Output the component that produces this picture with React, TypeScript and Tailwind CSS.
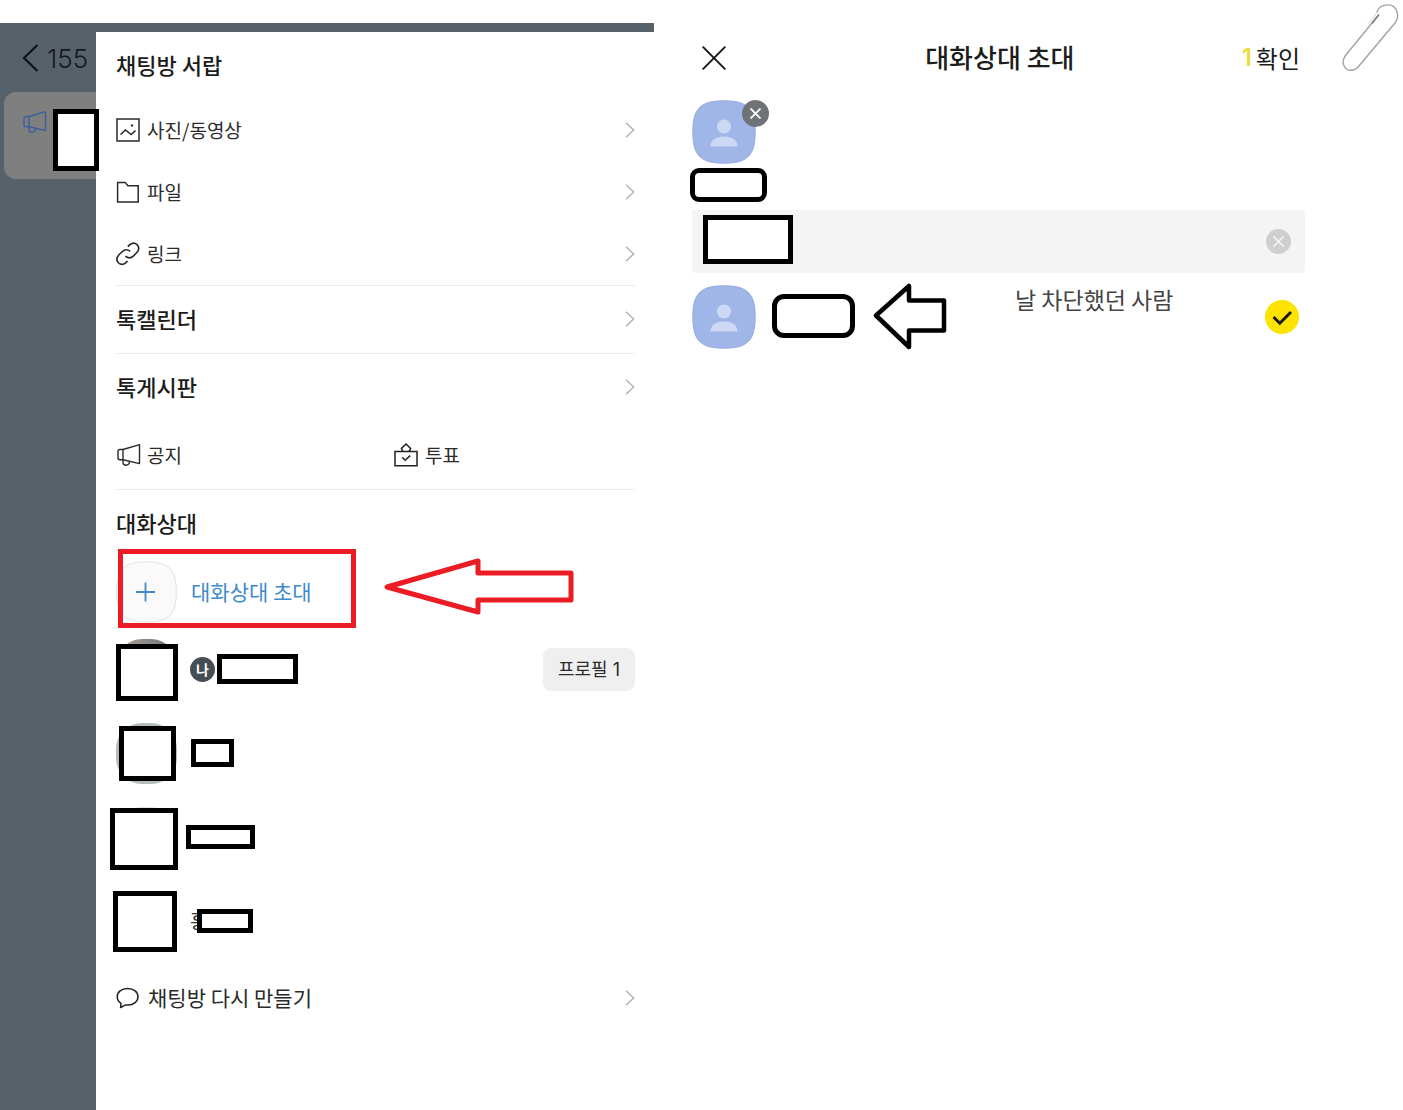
import type { ReactNode } from "react";

const sans = "font-['Noto_Sans_CJK_KR',sans-serif]";

function Chevron() {
  return (
    <svg width="10" height="16" viewBox="0 0 10 16" fill="none" stroke="#b4b4b4" strokeWidth="1.5" aria-hidden="true">
      <path d="M1 .8 8.6 8 1 15.2" />
    </svg>
  );
}

function PhotoIcon() {
  return (
    <svg width="24" height="24" viewBox="0 0 24 24" fill="none" stroke="#2a2a2a" strokeWidth="1.5" aria-hidden="true">
      <rect x="1" y="1" width="22" height="22" />
      <path d="M4.500 16.500 9.500 12l5.600 4.600 4.400-4" />
      <circle cx="16" cy="7.400" r="1.200" fill="#2a2a2a" stroke="none" />
    </svg>
  );
}

function FolderIcon() {
  return (
    <svg width="24" height="24" viewBox="0 0 24 24" fill="none" stroke="#2a2a2a" strokeWidth="1.5" aria-hidden="true">
      <path d="M1.600 22V2.400h7.600l2.600 3.400h10.400V22Z" />
    </svg>
  );
}

function LinkIcon() {
  return (
    <svg width="24" height="24" viewBox="0 0 24 24" fill="none" stroke="#2a2a2a" strokeWidth="1.600" aria-hidden="true">
      <path d="M11.800 4.600C15 1.200 18.400.2 21 2.600c2.600 2.600 2 5.600-.4 8.200l-3 3c-2.600 2.400-5.600 2.600-8.200.4" />
      <path d="M14.200 9.400c-2.600-2.200-5.600-2-8.200.4l-3 3c-2.400 2.600-2.800 5.800-.4 8.200 2.600 2.400 6.200 1.600 9-2" />
    </svg>
  );
}

function MegaphoneIcon({ color }: { color: string }) {
  return (
    <svg width="26" height="24" viewBox="0 0 24 24" fill="none" stroke={color} strokeWidth="1.400" strokeLinejoin="round" aria-hidden="true">
      <path d="M6 6.500 22.500 1.600v19L6 16.800" />
      <path d="M6 6.500H2.800Q1 6.500 1 8.300V15q0 1.800 1.800 1.800H6Z" />
      <path d="M6 17v2a3.200 3.200 0 0 0 6.400 0v-.6" />
    </svg>
  );
}

function VoteIcon() {
  return (
    <svg width="24" height="24" viewBox="0 0 24 24" fill="none" stroke="#222" strokeWidth="1.500" aria-hidden="true">
      <path d="M1 8.600h22v14.200H1Z" />
      <path d="M8.800 8.400 7.400 5.400 12 1l4.600 4.400-1.400 3" />
      <path d="m8.200 14.200 3 3 5-4.600" />
    </svg>
  );
}

function BubbleIcon() {
  return (
    <svg width="24" height="22" viewBox="0 0 24 22" fill="none" stroke="#222" strokeWidth="1.500" strokeLinejoin="round" aria-hidden="true">
      <path d="M5 16.400C2.600 14.800 1.200 12.500 1.200 9.800 1.200 5.200 5.400 1.500 11.600 1.500S22 5.200 22 9.800s-4.200 8.300-10.400 8.300H9.200L4.600 20.500Z" />
    </svg>
  );
}

function Avatar() {
  return (
    <svg width="64" height="64" viewBox="0 0 64 64" aria-hidden="true">
      <path d="M32 .8C55.500 .8 63.200 8.500 63.200 32S55.500 63.200 32 63.200 .8 55.500 .8 32 8.500 .8 32 .8Z" fill="#a0b6e8" stroke="#94a9dc" />
      <circle cx="32" cy="26.500" r="7" fill="#cdd8f4" />
      <path d="M18.500 46.500c0-6 5-10 13.500-10s13.500 4 13.500 10Z" fill="#cdd8f4" />
    </svg>
  );
}

function MenuRow({ icon, label }: { icon: ReactNode; label: string }) {
  return (
    <li>
      <button className="flex h-[62px] w-full items-center gap-[7px] text-left text-[19px] text-[#2b2b2b]">
        {icon}
        <span className="flex-1">{label}</span>
        <Chevron />
      </button>
    </li>
  );
}

function SectionLink({ label }: { label: string }) {
  return (
    <button className="flex h-[68px] w-full items-center justify-between border-t border-[#ececec] pb-[2px] text-left text-[22px] font-medium text-[#1c1c1c]">
      {label}
      <Chevron />
    </button>
  );
}

type Member = { name?: string; photo: string; cover: string; label: string; me?: boolean };

const members: Member[] = [
  {
    photo: "bg-[linear-gradient(90deg,#b9a878_0%,#9a9490_30%,#6e7378_100%)]",
    cover: "left-0 top-[17px] h-[57px] w-[62px]",
    label: "ml-[2px] h-[30px] w-[81px]",
    me: true,
  },
  { photo: "bg-[#b4bcbe]", cover: "left-[3px] top-[15px] h-[55px] w-[57px]", label: "ml-[14px] h-[28px] w-[43px]" },
  { photo: "bg-[#e4e4e4]", cover: "-left-[6px] top-[13px] h-[62px] w-[68px]", label: "ml-[9px] h-[24px] w-[69px]" },
  { name: "홍", photo: "bg-[#777]", cover: "-left-[3px] top-[12px] h-[61px] w-[64px]", label: "-ml-[11px] h-[24px] w-[56px]" },
];

function MemberRow({ member }: { member: Member }) {
  return (
    <li className="relative flex h-[84px] items-center">
      <span className={`size-[61px] shrink-0 rounded-[26px] ${member.photo}`} />
      <span className={`absolute border-[5px] border-black bg-white ${member.cover}`} />
      {member.me && (
        <span className="ml-[13px] flex size-[25px] items-center justify-center rounded-full bg-[#454d56] text-[14px] font-bold text-white">
          나
        </span>
      )}
      {member.name && <span className="ml-[13px] text-[20px] text-[#333]">{member.name}</span>}
      <span className={`relative border-[5px] border-black bg-white ${member.label}`} />
      {member.me && (
        <button className="ml-auto h-[43px] rounded-lg bg-[#efefef] px-[15px] font-['Inter','Noto_Sans_CJK_KR',sans-serif] text-[18px] text-[#2b2b2b]">
          프로필 1
        </button>
      )}
    </li>
  );
}

function ChatStrip() {
  return (
    <aside className="w-[96px] shrink-0 pt-3">
      <button aria-label="뒤로 155" className="flex h-[46px] items-center gap-2 pl-[22px] text-[26px] text-[#15181b]">
        <svg width="17" height="28" viewBox="0 0 17 28" fill="none" stroke="#101214" strokeWidth="2.200" aria-hidden="true">
          <path d="M15.500 1 2 14l13.500 13" />
        </svg>
        <span className="font-['Inter',sans-serif] font-light">155</span>
      </button>
      <div className="relative mt-[11px] ml-1 h-[87px] rounded-l-xl bg-[#7f7f7f] pt-[18px] pl-[18px]">
        <MegaphoneIcon color="#3a5f9c" />
        <span className="absolute top-[17px] left-[49px] z-10 h-[62px] w-[46px] border-[5px] border-black bg-white" />
      </div>
    </aside>
  );
}

function Drawer() {
  return (
    <main className="mt-[9px] flex-1 bg-white pr-[19px] pl-5">
      <h2 className="flex h-[67px] items-center pb-[2px] text-[22px] font-medium text-[#1c1c1c]">채팅방 서랍</h2>
      <ul>
        <MenuRow icon={<PhotoIcon />} label="사진/동영상" />
        <MenuRow icon={<FolderIcon />} label="파일" />
        <MenuRow icon={<LinkIcon />} label="링크" />
      </ul>
      <SectionLink label="톡캘린더" />
      <SectionLink label="톡게시판" />
      <div className="flex h-[68px] items-center text-[19px] text-[#2b2b2b]">
        <button className="flex w-[278px] items-center gap-[5px]">
          <MegaphoneIcon color="#2a2a2a" />
          공지
        </button>
        <button className="flex items-center gap-[7px]">
          <VoteIcon />
          투표
        </button>
      </div>
      <h2 className="flex h-[68px] items-center border-t border-[#ececec] pb-[2px] text-[22px] font-medium text-[#1c1c1c]">대화상대</h2>
      <div className="relative h-[70px]">
        <button className="flex h-full items-center gap-[14px] text-[21px] text-[#3f8acb]">
          <svg width="61" height="62" viewBox="0 0 61 62" fill="none" aria-hidden="true">
            <path d="M30.500 .8C53 .8 60.300 8.500 60.300 31S53 61.200 30.500 61.200 .7 53.500 .7 31 8 .8 30.500 .8Z" fill="#fafafa" stroke="#e2e2e2" />
            <path d="M20 31h19M29.500 21.500v19" stroke="#3f8acb" strokeWidth="1.800" />
          </svg>
          대화상대 초대
        </button>
        <span className="pointer-events-none absolute -top-2 left-[2px] h-[79px] w-[238px] border-[5px] border-[#eb1c24]" />
        <svg className="pointer-events-none absolute top-0 left-[267px]" width="192" height="60" viewBox="0 0 192 60" fill="none" stroke="#eb1c24" strokeWidth="5" strokeLinejoin="round" aria-hidden="true">
          <path d="M4 30 95 4v12h93v27H95v12Z" />
        </svg>
      </div>
      <ul>
        {members.map((member, i) => (
          <MemberRow key={i} member={member} />
        ))}
      </ul>
      <button className="flex h-[70px] w-full items-center gap-2 text-left text-[21px] text-[#2b2b2b]">
        <BubbleIcon />
        <span className="flex-1">채팅방 다시 만들기</span>
        <Chevron />
      </button>
    </main>
  );
}

function InvitePanel() {
  return (
    <section className="pt-8 pr-[98px] pl-[38px]">
      <header className="flex h-[52px] items-center justify-between pr-[5px] pl-[10px] text-[#1c1c1c]">
        <button aria-label="닫기" className="w-14">
          <svg width="24" height="24" viewBox="0 0 24 24" fill="none" stroke="#151515" strokeWidth="1.900" strokeLinecap="round" aria-hidden="true">
            <path d="m1.200 1.200 21.600 21.600M22.800 1.200 1.200 22.800" />
          </svg>
        </button>
        <h1 className="pb-[2px] text-[26px] leading-9 font-medium">대화상대 초대</h1>
        <button className="flex items-center gap-1 text-[24px] leading-9">
          <b className="font-['Inter',sans-serif] font-semibold text-[#eedc3c]">1</b>확인
        </button>
      </header>

      <div className="relative mt-4 w-[77px]">
        <Avatar />
        <button aria-label="선택 해제" className="absolute top-0 right-0 flex size-[27px] items-center justify-center rounded-full bg-[#6f7378]">
          <svg width="11" height="11" viewBox="0 0 11 11" stroke="#fff" strokeWidth="1.800" aria-hidden="true">
            <path d="m.5.5 10 10M10.500.5l-10 10" />
          </svg>
        </button>
      </div>
      <div className="mt-1 -ml-[2px] h-[34px] w-[77px] rounded-[9px] border-[5px] border-black bg-white" />

      <div className="relative mt-2 h-[63px] rounded-sm bg-[#f4f4f4]">
        <input aria-label="이름 검색" className="h-full w-full bg-transparent px-4 text-[20px] outline-none" />
        <span className="pointer-events-none absolute top-[5px] left-[11px] h-[49px] w-[90px] border-[5px] border-black bg-white" />
        <button aria-label="지우기" className="absolute top-[19px] right-[14px] flex size-[25px] items-center justify-center rounded-full bg-[#cfcfcf]">
          <svg width="11" height="11" viewBox="0 0 11 11" stroke="#f6f6f6" strokeWidth="1.500" aria-hidden="true">
            <path d="m.3.3 10.400 10.400M10.700.3.3 10.700" />
          </svg>
        </button>
      </div>

      <label className="mt-3 flex h-16 items-center pr-[6px]">
        <Avatar />
        <span className="mb-[2px] ml-4 h-[44px] w-[83px] rounded-[12px] border-[5px] border-black" />
        <svg className="ml-[17px]" width="76" height="68" viewBox="0 0 76 68" fill="none" stroke="#000" strokeWidth="4.500" strokeLinejoin="round" aria-hidden="true">
          <path d="M4 32.500 37 3v14.500h35v30H37V64Z" />
        </svg>
        <span className="ml-[67px] self-start text-[23px] leading-7 text-[#444]">날 차단했던 사람</span>
        <span className="relative ml-auto size-[34px]">
          <input type="checkbox" defaultChecked aria-label="날 차단했던 사람 선택" className="block size-full appearance-none rounded-full bg-[#fde300]" />
          <svg className="pointer-events-none absolute inset-0" width="34" height="34" viewBox="0 0 34 34" fill="none" stroke="#1b1a10" strokeWidth="3" aria-hidden="true">
            <path d="m8.500 17 6.300 6.200L26 12" />
          </svg>
        </span>
      </label>
    </section>
  );
}

function PaperClip() {
  return (
    <svg className="absolute top-1 right-1" width="58" height="68" viewBox="0 0 58 68" fill="none" aria-hidden="true">
      <path d="M37.700 10.700 4.500 51.500C-1 59 4 66.300 10 66.300c3.500 0 5.500-1.300 7.500-3.800L54 19C60 11 55 .9 47 .9c-6 0-10 3.300-11.300 7.800" stroke="#a2a2a2" strokeWidth="1.400" />
      <path d="m38 10.400-7 9" stroke="#808080" strokeWidth="1.600" />
      <path d="M26.500 18.500c4-1 6-4 8.500-9" stroke="#d4d4d4" />
    </svg>
  );
}

export default function App() {
  return (
    <div className={`relative grid min-h-screen grid-cols-[654fr_749fr] bg-white ${sans}`}>
      <div className="mt-[23px] flex bg-[#57616a]">
        <ChatStrip />
        <Drawer />
      </div>
      <InvitePanel />
      <PaperClip />
    </div>
  );
}
